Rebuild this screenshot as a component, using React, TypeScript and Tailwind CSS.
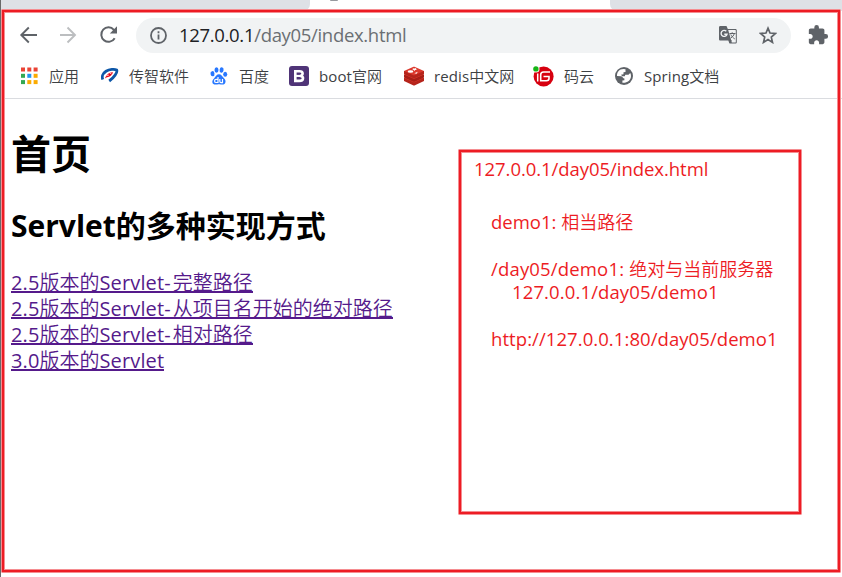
import type { ReactNode } from "react";

const FONT = "font-['Open_Sans','Noto_Sans_CJK_SC',sans-serif]";

function Bookmark({ icon, gap, latin, cjk, className }: { icon: ReactNode; gap: string; latin?: string; cjk: string; className: string }) {
  return (
    <div className={`flex h-5 shrink-0 items-center ${gap} ${className}`}>
      {icon}
      <span className="whitespace-nowrap text-[15px] leading-5">
        {latin && <span className="tracking-[0.1px]">{latin}</span>}
        <span className="font-[350]">{cjk}</span>
      </span>
    </div>
  );
}

function AppsIcon() {
  const colors = ["#ea4335", "#ea4335", "#ea4335", "#34a853", "#2196f3", "#fbab00", "#34a853", "#fbab00", "#fbab00"];
  return (
    <svg width="18" height="18" viewBox="0 0 18 18" className="shrink-0">
      {colors.map((c, i) => (
        <rect key={i} x={1 + (i % 3) * 6.3} y={0.5 + Math.floor(i / 3) * 6.3} width="4" height="4" fill={c} />
      ))}
    </svg>
  );
}

function ChuanzhiIcon() {
  return (
    <svg width="18" height="18" viewBox="0 0 18 18" className="shrink-0">
      <path d="M1.800 12.500C.7 10 1.500 6.500 5 4.300 8.500 2.200 13.500 1.800 15.700 3c1 2.500-2.700 7.500-7.500 11" fill="none" stroke="#0d57a8" strokeWidth="2.800" />
      <path d="M4 11.500C5 8 8 5 12 5.200c-.6 2.800-3 4.300-5 4.800-1.300.3-2.200.7-3 1.500z" fill="#e60012" />
      <path d="M5.500 8.700 8 8M8.500 6l2 1" stroke="white" strokeWidth=".7" />
    </svg>
  );
}

function BaiduIcon() {
  return (
    <svg width="18" height="18" viewBox="0 0 18 18" className="shrink-0" fill="#2878ff">
      <ellipse cx="2.500" cy="6.700" rx="2" ry="2.600" transform="rotate(-8 2.500 6.700)" />
      <ellipse cx="6.500" cy="3" rx="2" ry="2.700" />
      <ellipse cx="11.600" cy="3" rx="2" ry="2.700" transform="rotate(8 11.600 3)" />
      <ellipse cx="15.200" cy="7.200" rx="2" ry="2.500" />
      <path d="M9 7.300c2.300 0 3 2.100 5 4 2.700 2.500 1.700 6.300-1.500 6.300-1.400 0-2.200-.4-3.500-.4s-2 .4-3.500.4c-3.400 0-4.300-3.700-1.500-6.200C6 9.400 6.700 7.300 9 7.300z" />
      <g fill="none" stroke="white" strokeWidth="1.200">
        <path d="M8 10v5.500H6.200c-2.200 0-2.200-3.200 0-3.200H8M9.800 12v2.300c0 1 .5 1.300 1.200 1.300h1.500V12" />
      </g>
    </svg>
  );
}

function BootIcon() {
  return (
    <svg width="20" height="20" viewBox="0 0 20 20" className="shrink-0">
      <rect width="20" height="20" rx="3" fill="#4f3477" />
      <path d="M6.300 5.200h4.300c3.900 0 3.700 3.700 1.100 4.700 3.400.8 3.100 5-1.300 5H6.300z" fill="none" stroke="white" strokeWidth="2.600" />
      <path d="M6.300 9.900h5.200" stroke="white" strokeWidth="2" />
    </svg>
  );
}

function RedisIcon() {
  return (
    <svg width="22" height="20" viewBox="0 0 22 20" className="shrink-0">
      <path d="M1 12v3l9 4.200c.7.300 1.300.3 2 0l9-4.200v-3z" fill="#b5241b" />
      <path d="m1 12 9-4h2l9 4-9 4c-.7.300-1.300.3-2 0z" fill="#dc382c" />
      <path d="M1 8.500v3l9 4c.7.300 1.300.3 2 0l9-4v-3z" fill="#a81e16" />
      <path d="m1 8.500 9-4h2l9 4-9 4c-.7.300-1.300.3-2 0z" fill="#dc382c" />
      <path d="M1 5v3l9 4c.7.300 1.300.3 2 0l9-4V5z" fill="#b5241b" />
      <path d="m1 5 9-4c.7-.3 1.300-.3 2 0l9 4-9 4c-.7.300-1.300.3-2 0z" fill="#dc382c" />
      <ellipse cx="7.500" cy="5.500" rx="2.800" ry="1.200" fill="white" />
      <path d="m9.500 2.200 1.800.4 2-.5-.4 1.100 1.500.7-2.200.2-.9.800-.6-1-1.700-.2 1.300-.5zM11.300 7.200l3.500-1.400-1.200 1.900z" fill="white" />
    </svg>
  );
}

function GiteeIcon() {
  return (
    <svg width="21" height="21" viewBox="0 0 21 21" className="shrink-0">
      <circle cx="10.600" cy="10.500" r="10" fill="#d7000f" />
      <path d="M17 6h-6.500c-2 0-2.800.9-2.800 2.800v5.900h5.800c1.800 0 2.500-.7 2.500-2.200v-2H10.500" fill="none" stroke="white" strokeWidth="1.600" />
      <path d="M4.700 7.500v8" stroke="white" strokeWidth="1.500" />
      <circle cx="3" cy="3" r="3.500" fill="white" />
      <circle cx="2.900" cy="2.900" r="2.700" fill="#16b516" />
    </svg>
  );
}

function GlobeIcon() {
  return (
    <svg width="18" height="18" viewBox="0 0 18 18" className="shrink-0">
      <circle cx="9" cy="9" r="9" fill="#5f6368" />
      <path d="M8.500 2C4 2 1.800 5.500 2 9l4.200.2c1.700.2 1.500 2.200 3.200 2.400v1.700l-2 .2v2.300c4.300.6 8.600-2.500 8.600-6.800 0-1.300-.3-2.200-.8-3l-1.700 1.700h-3.200l-.5 1.600H7.200L6 7.800l2.500-.5V5.200l2-.2V2.300z" fill="white" />
    </svg>
  );
}

function Toolbar() {
  return (
    <div className="flex h-[42px] shrink-0 items-center pl-[18px] text-[#5f6368]">
      <svg width="18" height="18" viewBox="0 0 18 18" className="mr-[22px] shrink-0" fill="none" stroke="#5f6368" strokeWidth="1.900">
        <path d="M18 9H2.500M9.800 1.500 2.300 9l7.500 7.500" />
      </svg>
      <svg width="18" height="18" viewBox="0 0 18 18" className="mr-[21px] shrink-0" fill="none" stroke="#bcbec0" strokeWidth="1.900">
        <path d="M1 9h14.500M8.500 1.500 16 9l-7.500 7.500" />
      </svg>
      <svg width="20" height="20" viewBox="0 0 20 20" className="mr-[18px] shrink-0">
        <path d="M16.700 13.200a7.200 7.200 0 1 1-.8-8.400l1.600 1.700" fill="none" stroke="#5f6368" strokeWidth="2" />
        <path d="M19 1.300v7.200h-7.200z" fill="#5f6368" />
      </svg>
      <div className="flex h-[35px] w-[655px] shrink-0 items-center rounded-full bg-[#f1f3f4] pl-[14px] pr-[14px]">
        <svg width="17" height="17" viewBox="0 0 17 17" className="mr-[12px] shrink-0" fill="none" stroke="#5f6368" strokeWidth="1.800">
          <circle cx="8.500" cy="8.500" r="7.500" />
          <path d="M8.500 7.500v5M8.500 4.300v2" />
        </svg>
        <span className="text-[18.500px] leading-6 tracking-[-0.320px] text-[#6b6f73]">
          <span className="text-[#202124]">127.0.0.1</span>/day05/index.html
        </span>
        <svg width="18" height="18" viewBox="0 0 18 18" className="ml-auto mr-[22px] shrink-0">
          <path d="M1.300 0h6.200l1.300 3h7.700c.7 0 1.300.6 1.300 1.300v11.900c0 .7-.6 1.300-1.300 1.300h-6l-1.200-3H1.300C.6 14.500 0 13.900 0 13.200V1.300C0 .6.600 0 1.300 0z" fill="#5f6368" />
          <path d="m9.200 4 3.600 12.500h3.400c.3 0 .6-.3.6-.6V4.600c0-.3-.3-.6-.6-.6z" fill="#f1f3f4" />
          <path d="M7.300 5.300A3 3 0 1 0 8 8.200H5.300" fill="none" stroke="#f1f3f4" strokeWidth="1.400" />
          <path d="M10.500 7.500h6M13.200 6.300v1.200M15.300 7.500c-.5 2-2 3.500-3.500 4.600M11.800 8.500c.7 1.700 2.300 3.300 4 4.500M10.500 17l2-2.500" fill="none" stroke="#5f6368" strokeWidth="1" />
        </svg>
        <svg width="18" height="18" viewBox="0 0 18 18" className="shrink-0">
          <path d="m9 2.200 2 4.800 5.400.5-4.100 3.600 1.200 5.300L9 13.600l-4.500 2.800 1.200-5.300-4.100-3.600L7 7z" fill="none" stroke="#5f6368" strokeWidth="1.700" />
        </svg>
      </div>
      <svg width="22" height="22" viewBox="0 0 24 24" className="ml-[16px] shrink-0" fill="#5f6368">
        <path d="M20.500 11H19V7c0-1.100-.9-2-2-2h-4V3.500a2.500 2.500 0 0 0-5 0V5H4c-1.100 0-1.990.9-1.990 2v3.800H3.500c1.490 0 2.700 1.210 2.700 2.700s-1.210 2.700-2.700 2.700H2V20c0 1.100.9 2 2 2h3.800v-1.500c0-1.490 1.210-2.700 2.700-2.700s2.700 1.210 2.700 2.700V22H17c1.100 0 2-.9 2-2v-4h1.500a2.500 2.500 0 0 0 0-5z" />
      </svg>
    </div>
  );
}

function BookmarkBar() {
  return (
    <div className="flex h-[38px] shrink-0 items-start pl-[19px] pt-[6px] text-[#3c4043]">
      <Bookmark icon={<AppsIcon />} gap="gap-[11px]" className="w-[81px]" cjk="应用" />
      <Bookmark icon={<ChuanzhiIcon />} gap="gap-[10px]" className="w-[109px]" cjk="传智软件" />
      <Bookmark icon={<BaiduIcon />} gap="gap-[11px]" className="w-[79px]" cjk="百度" />
      <Bookmark icon={<BootIcon />} gap="gap-[10px]" className="w-[114px]" latin="boot" cjk="官网" />
      <Bookmark icon={<RedisIcon />} gap="gap-[9px]" className="w-[130px]" latin="redis" cjk="中文网" />
      <Bookmark icon={<GiteeIcon />} gap="gap-[10px]" className="w-[82px]" cjk="码云" />
      <Bookmark icon={<GlobeIcon />} gap="gap-[11px]" className="w-[110px]" latin="Spring" cjk="文档" />
    </div>
  );
}

const LINKS = [
  ["2.5", "完整路径"],
  ["2.5", "从项目名开始的绝对路径"],
  ["2.5", "相对路径"],
  ["3.0", ""],
];

function Page() {
  return (
    <main className="flex flex-col items-start pl-[10px] text-black">
      <h1 className="mt-[25px] h-[60px] text-[40px] font-bold leading-[60px]">首页</h1>
      <h2 className="mt-[20px] h-[44px] whitespace-nowrap text-[30px] font-bold leading-[44px]">Servlet的多种实现方式</h2>
      <div className="mt-[21px] flex flex-col items-start gap-[2px]">
        {LINKS.map(([version, kind], i) => (
          <a key={i} className="block h-[24px] whitespace-nowrap border-b-2 border-[#551a8b] text-[20px] leading-[28px] text-[#551a8b]">
            <span className="tracking-[0.100px]">{version}</span>
            <span className="font-[350]">版本的</span>
            <span className="tracking-[0.150px]">Servlet</span>
            {kind && <span className="tracking-[2px]">-</span>}
            <span className="font-[350]">{kind}</span>
          </a>
        ))}
      </div>
    </main>
  );
}

function Note() {
  return (
    <aside className="absolute left-[457px] top-[149px] h-[366px] w-[344px] rounded-[1px] border border-[#f58d91]">
      <div className="h-full border-2 border-[#ed1c24]">
        <div className="flex h-full flex-col items-start whitespace-pre border border-[#f58d91] pl-[12px] pt-[4px] text-[18.500px] leading-[24px] text-[#ed1c24]">
          <p className="tracking-[-0.050px]">127.0.0.1/day05/index.html</p>
          <p className="ml-[17px] mt-[29px]">demo1: <span className="text-[18px] font-[350]">相当路径</span></p>
          <p className="ml-[17px] mt-[23px] tracking-[0.170px]">/day05/demo1: <span className="text-[18px] font-[350] tracking-[0px]">绝对与当前服务器</span></p>
          <p className="-mt-px ml-[38px] tracking-[0.120px]">127.0.0.1/day05/demo1</p>
          <p className="ml-[17px] mt-[23px] tracking-[0.070px]">http://127.0.0.1:80/day05/demo1</p>
        </div>
      </div>
    </aside>
  );
}

export default function App() {
  return (
    <div className={`relative flex h-[577px] w-[842px] flex-col overflow-hidden border-l border-[#696969] bg-white ${FONT}`}>
      <div className="flex h-[11px] shrink-0 justify-between">
        <div className="h-full w-[309px] rounded-br-[7px] bg-[#dee1e6]" />
        <div className="-ml-[252px] h-[1px] w-[8px] rounded-b-full bg-[#96999e]" />
        <div className="h-full w-[232px] rounded-bl-[7px] bg-[#dee1e6]" />
      </div>
      <div className="mt-[3px]" />
      <Toolbar />
      <div className="mt-[4px]" />
      <BookmarkBar />
      <div className="h-px shrink-0 bg-[#dadce0]" />
      <Page />
      <div className="pointer-events-none absolute left-0 top-[9px] h-[564px] w-[840px] rounded-[1px] border border-[#f58d91]">
        <div className="h-full border-2 border-[#ed1c24]">
          <div className="h-full border border-[#f58d91]" />
        </div>
      </div>
      <Note />
    </div>
  );
}
